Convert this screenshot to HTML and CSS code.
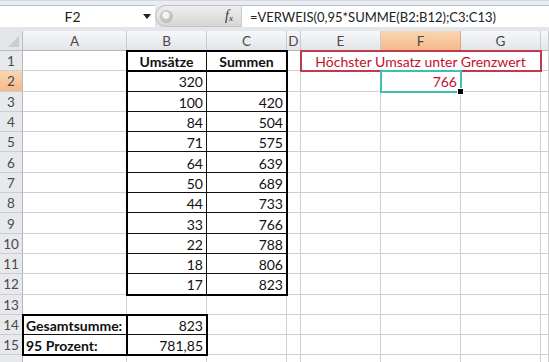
FILE: index.html
```html
<!DOCTYPE html>
<html lang="de">
<head>
<meta charset="utf-8">
<title>Excel VERWEIS</title>
<link rel="stylesheet" href="styles.css">
</head>
<body>
<div class="app">
  <div class="fbar">
    <div class="namebox"><span class="nb-text">F2</span><span class="nb-arrow"></span></div>
    <div class="pill"><span class="knob"></span><span class="fx">f<sub>x</sub></span></div>
    <div class="formula">=VERWEIS(0,95*SUMME(B2:B12);C3:C13)</div>
  </div>
  <div class="sheet">
    <div class="corner"><span class="tri"></span></div>
    <div class="ch">A</div><div class="ch">B</div><div class="ch">C</div><div class="ch">D</div><div class="ch">E</div><div class="ch sel">F</div><div class="ch">G</div><div class="ch"></div>

    <div class="rh">1</div><div class="c"></div><div class="c bx b ctr">Umsätze</div><div class="c bx b ctr">Summen</div><div class="c"></div><div class="c merged red">Höchster Umsatz unter Grenzwert</div><div class="c"></div>
    <div class="rh sel">2</div><div class="c"></div><div class="c bx n">320</div><div class="c bx n"></div><div class="c"></div><div class="c"></div><div class="c n red">766</div><div class="c"></div><div class="c"></div>
    <div class="rh">3</div><div class="c"></div><div class="c bx n">100</div><div class="c bx n">420</div><div class="c"></div><div class="c"></div><div class="c"></div><div class="c"></div><div class="c"></div>
    <div class="rh">4</div><div class="c"></div><div class="c bx n">84</div><div class="c bx n">504</div><div class="c"></div><div class="c"></div><div class="c"></div><div class="c"></div><div class="c"></div>
    <div class="rh">5</div><div class="c"></div><div class="c bx n">71</div><div class="c bx n">575</div><div class="c"></div><div class="c"></div><div class="c"></div><div class="c"></div><div class="c"></div>
    <div class="rh">6</div><div class="c"></div><div class="c bx n">64</div><div class="c bx n">639</div><div class="c"></div><div class="c"></div><div class="c"></div><div class="c"></div><div class="c"></div>
    <div class="rh">7</div><div class="c"></div><div class="c bx n">50</div><div class="c bx n">689</div><div class="c"></div><div class="c"></div><div class="c"></div><div class="c"></div><div class="c"></div>
    <div class="rh">8</div><div class="c"></div><div class="c bx n">44</div><div class="c bx n">733</div><div class="c"></div><div class="c"></div><div class="c"></div><div class="c"></div><div class="c"></div>
    <div class="rh">9</div><div class="c"></div><div class="c bx n">33</div><div class="c bx n">766</div><div class="c"></div><div class="c"></div><div class="c"></div><div class="c"></div><div class="c"></div>
    <div class="rh">10</div><div class="c"></div><div class="c bx n">22</div><div class="c bx n">788</div><div class="c"></div><div class="c"></div><div class="c"></div><div class="c"></div><div class="c"></div>
    <div class="rh">11</div><div class="c"></div><div class="c bx n">18</div><div class="c bx n">806</div><div class="c"></div><div class="c"></div><div class="c"></div><div class="c"></div><div class="c"></div>
    <div class="rh">12</div><div class="c"></div><div class="c bx n">17</div><div class="c bx n">823</div><div class="c"></div><div class="c"></div><div class="c"></div><div class="c"></div><div class="c"></div>
    <div class="rh">13</div><div class="c"></div><div class="c"></div><div class="c"></div><div class="c"></div><div class="c"></div><div class="c"></div><div class="c"></div><div class="c"></div>
    <div class="rh">14</div><div class="c bx b">Gesamtsumme:</div><div class="c bx n">823</div><div class="c"></div><div class="c"></div><div class="c"></div><div class="c"></div><div class="c"></div><div class="c"></div>
    <div class="rh">15</div><div class="c bx b">95 Prozent:</div><div class="c bx n">781,85</div><div class="c"></div><div class="c"></div><div class="c"></div><div class="c"></div><div class="c"></div><div class="c"></div>
    <div class="rh"></div><div class="c"></div><div class="c"></div><div class="c"></div><div class="c"></div><div class="c"></div><div class="c"></div><div class="c"></div><div class="c"></div>

    <div class="frame thick area-b1c12"></div>
    <div class="frame thick area-b1c1"></div>
    <div class="frame thick area-a14a15"></div>
    <div class="frame thick area-b14b15"></div>
    <div class="frame redbox area-e1g1"></div>
    <div class="frame active area-f2"><span class="handle"></span></div>
  </div>
</div>
</body>
</html>
```

FILE: styles.css
```css
html, body {
  margin: 0;
  padding: 0;
  background: #ffffff;
}

.app {
  width: 549px;
  height: 362px;
  overflow: hidden;
  font-family: "Lato", "Liberation Sans", sans-serif;
  font-size: 14px;
  color: #111;
}

/* ---------- formula bar ---------- */
.fbar {
  height: 31px;
  box-sizing: border-box;
  display: flex;
  align-items: stretch;
  padding: 4px 0 4px 0;
  background: linear-gradient(#e9ecf0, #e2e5ea);
  border-top: 1px solid #d4d9df;
}

.namebox {
  width: 155px;
  background: #ffffff;
  display: flex;
  align-items: center;
  border-top: 1px solid #b9c0c8;
}

.nb-text {
  flex: 1;
  text-align: center;
  padding-left: 2px;
  color: #222;
}

.nb-arrow {
  width: 0;
  height: 0;
  border-left: 4px solid transparent;
  border-right: 4px solid transparent;
  border-top: 5px solid #222;
  margin-right: 4px;
}

.pill {
  width: 86px;
  display: flex;
  align-items: center;
  background: linear-gradient(#eeeeee, #d6d6d6);
  border-radius: 11px 0 0 11px;
  border: 1px solid #c4c4c4;
  border-right: none;
  box-sizing: border-box;
}

.knob {
  width: 13px;
  height: 13px;
  border-radius: 50%;
  margin-left: 4px;
  background: radial-gradient(circle at 45% 40%, #f4f4f4 0 3px, #c9c9c9 4px, #bdbdbd 7px);
}

.fx {
  margin-left: auto;
  margin-right: 8px;
  font-family: "Liberation Serif", serif;
  font-style: italic;
  font-size: 14px;
  color: #333;
}

.fx sub {
  font-size: 9px;
  vertical-align: -1px;
}

.formula {
  flex: 1;
  background: #ffffff;
  border-top: 1px solid #b9c0c8;
  border-left: 1px solid #c8cdd3;
  padding-left: 8px;
  display: flex;
  align-items: center;
  font-size: 13px;
  color: #222;
  white-space: nowrap;
}

/* ---------- sheet grid ---------- */
.sheet {
  position: relative;
  display: grid;
  grid-template-columns: 23px 104px 80px 80px 14px 80px 80px 80px 1fr;
  grid-template-rows: 20px repeat(16, 20.3px);
}

.sheet > div {
  box-sizing: border-box;
}

.corner {
  position: relative;
  background: #e4e6e9;
  border-right: 1px solid #b8bcc2;
  border-bottom: 1px solid #b8bcc2;
}

.tri {
  position: absolute;
  right: 3px;
  bottom: 3px;
  width: 0;
  height: 0;
  border-left: 11px solid transparent;
  border-bottom: 11px solid #c9ccd0;
}

.ch {
  background: linear-gradient(#f6f7f8, #e3e5e8);
  border-right: 1px solid #c7cace;
  border-bottom: 1px solid #b4b8bd;
  display: flex;
  align-items: center;
  justify-content: center;
  color: #4a4a4a;
  font-size: 13.5px;
  padding-top: 1px;
}

.ch.sel {
  background: linear-gradient(#f9d6b4, #f6b98a);
  border-right-color: #d7a77e;
}

.rh {
  background: #e7e9ec;
  border-right: 1px solid #b4b8bd;
  border-bottom: 1px solid #cacdd1;
  display: flex;
  align-items: center;
  justify-content: center;
  color: #4a4a4a;
  font-size: 13.5px;
  padding-top: 1px;
}

.rh.sel {
  background: linear-gradient(#f9d6b4, #f6b98a);
}

.c {
  border-right: 1px solid #d0d0d0;
  border-bottom: 1px solid #d0d0d0;
  display: flex;
  align-items: center;
  padding: 2px 3px 0 3px;
  white-space: nowrap;
  overflow: visible;
}

.c.bx {
  border-right-color: #111;
  border-bottom-color: #111;
}

.c.n {
  justify-content: flex-end;
}

.c.b {
  font-weight: 700;
}

.c.ctr {
  justify-content: center;
}

.c.merged {
  grid-column: 6 / 9;
  justify-content: center;
}

.red {
  color: #c4102c;
}

/* ---------- overlay frames ---------- */
.frame {
  position: absolute;
  top: -1px;
  left: -1px;
  right: -1px;
  bottom: -1px;
  pointer-events: none;
}

.thick {
  border: 2px solid #000;
}

.redbox {
  border: 2px solid #c0394d;
}

.active {
  border: 2px solid #3fbfae;
}

.handle {
  position: absolute;
  right: -4px;
  bottom: -4px;
  width: 5px;
  height: 5px;
  background: #000;
  border: 1px solid #fff;
}

.area-b1c12 { grid-column: 3 / 5; grid-row: 2 / 14; }
.area-b1c1 { grid-column: 3 / 5; grid-row: 2 / 3; }
.area-a14a15 { grid-column: 2 / 3; grid-row: 15 / 17; }
.area-b14b15 { grid-column: 3 / 4; grid-row: 15 / 17; }
.area-e1g1 { grid-column: 6 / 9; grid-row: 2 / 3; }
.area-f2 { grid-column: 7 / 8; grid-row: 3 / 4; }
```
